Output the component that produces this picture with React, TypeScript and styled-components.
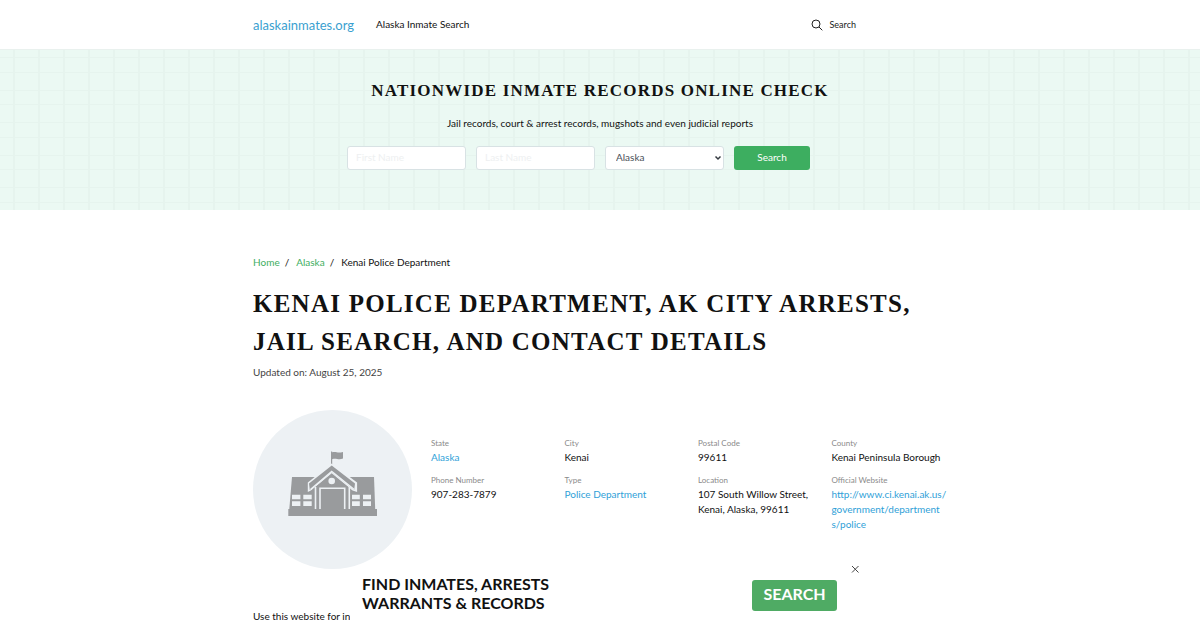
import React from "react";
import styled, { createGlobalStyle } from "styled-components";

const GlobalStyle = createGlobalStyle`
  *, *::before, *::after { box-sizing: border-box; }
  body {
    margin: 0;
    background: #fff;
    color: #111;
    font-family: Lato, "Liberation Sans", sans-serif;
    font-size: 10px;
    line-height: 15px;
  }
  a { color: inherit; text-decoration: none; }
  button, input, select { font: inherit; }
`;

const Container = styled.div`
  width: 100%;
  max-width: 714px;
  margin: 0 auto;
  padding: 0 10px;
`;

const Header = styled.header`
  background: #fff;
  border-bottom: 1px solid #e9f1ee;
`;

const Nav = styled.nav`
  display: flex;
  align-items: center;
  gap: 22px;
  min-height: 49px;
  padding-right: 91px;
`;

const Brand = styled.a`
  color: #3a9fd0;
  font-size: 13px;
  line-height: 20px;
`;

const SearchToggle = styled.button`
  display: flex;
  align-items: center;
  gap: 7px;
  margin-left: auto;
  padding: 0;
  border: 0;
  background: none;
  color: #222;
  font-size: 9px;
  cursor: pointer;
`;

const Hero = styled.section`
  padding: 28px 10px 40px;
  text-align: center;
  background-color: #ebf9f3;
  background-image:
    linear-gradient(90deg, #e6f4ee 2px, transparent 2px),
    linear-gradient(#e6f4ee 1px, transparent 1px),
    linear-gradient(#e6f4ee 1px, transparent 1px),
    linear-gradient(#e6f4ee 1px, transparent 1px),
    linear-gradient(#e6f4ee 1px, transparent 1px);
  background-size: 25px 100%, 100% 65px, 100% 65px, 100% 65px, 100% 65px;
  background-position: 13px 0, 0 7px, 0 22px, 0 40px, 0 54px;
`;

const HeroTitle = styled.h2`
  margin: 0;
  font: bold 17px/25px "Liberation Serif", serif;
  letter-spacing: 0.07em;
  text-transform: uppercase;
`;

const HeroText = styled.p`
  margin: 13px 0 15px;
`;

const SearchForm = styled.form`
  display: grid;
  grid-template-columns: repeat(4, 1fr);
  gap: 10px;
  max-width: 506px;
  margin: 0 auto;
`;

const Field = styled.input`
  width: 100%;
  height: 24px;
  padding: 0 8px 2px;
  border: 1px solid #d8e2e4;
  border-radius: 3px;
  background: #fff;
  &::placeholder { color: #eef0f1; opacity: 1; }
`;

const SelectBox = styled.div`
  display: grid;
  align-items: center;
  > * { grid-area: 1 / 1; }
  svg { justify-self: end; margin-right: 2px; pointer-events: none; }
`;

const Select = styled.select`
  width: 100%;
  height: 24px;
  padding: 0 10px 1px;
  border: 1px solid #d8e2e4;
  border-radius: 3px;
  background: #fff;
  color: #495057;
  appearance: none;
`;

const Submit = styled.button`
  justify-self: start;
  width: 76px;
  height: 24px;
  padding: 0 0 1px;
  border: 0;
  border-radius: 3px;
  background: #3dae60;
  color: #fff;
  cursor: pointer;
`;

const Main = styled.main`
  padding: 45px 0 8px;
`;

const Breadcrumb = styled.ol`
  display: flex;
  margin: 0;
  padding: 0;
  list-style: none;
`;

const Crumb = styled.li`
  & + &::before { content: "/"; padding: 0 7px 0 5px; }
  a { color: #3dae60; }
`;

const Title = styled.h1`
  margin: 15px 0 4px;
  font: bold 25px/38px "Liberation Serif", serif;
  letter-spacing: 0.05em;
  text-transform: uppercase;
`;

const Updated = styled.p`
  margin: 0 0 30px;
  color: #444;
`;

const Profile = styled.section`
  display: flex;
  align-items: flex-start;
  gap: 19px;
  margin-bottom: 40px;
`;

const Badge = styled.div`
  display: flex;
  flex: none;
  width: 159px;
  height: 159px;
  border-radius: 50%;
  background: #edf1f4;
`;

const Details = styled.dl`
  display: grid;
  flex: 1;
  grid-template-columns: repeat(4, minmax(0, 1fr));
  gap: 8px 18px;
  margin: 0;
  padding-top: 26px;
`;

const Term = styled.dt`
  color: #8a8a8a;
  font-size: 8px;
  line-height: 14px;
`;

const Value = styled.dd`
  margin: 0;
  white-space: pre-line;
  overflow-wrap: anywhere;
  a { color: #2f9fd8; }
`;

const Intro = styled.p`
  margin: 0;
`;

const Banner = styled.aside`
  position: fixed;
  bottom: 0;
  left: 50%;
  display: flex;
  align-items: center;
  justify-content: space-between;
  width: 500px;
  max-width: 100%;
  height: 50px;
  padding: 0 13px 0 12px;
  background: #fff;
  transform: translateX(-50%);
`;

const BannerText = styled.p`
  margin: 0;
  padding-bottom: 4px;
  color: #111;
  font-size: 16px;
  font-weight: bold;
  line-height: 19px;
  text-transform: uppercase;
`;

const BannerLink = styled.a`
  width: 85px;
  padding-bottom: 3px;
  border-radius: 3px;
  background: #4fab64;
  color: #fff;
  font-size: 16px;
  font-weight: bold;
  line-height: 28px;
  text-align: center;
`;

const Close = styled.button`
  position: absolute;
  top: -6px;
  right: -10px;
  display: flex;
  padding: 0;
  border: 0;
  background: none;
  color: #444;
  cursor: pointer;
`;

function SearchIcon() {
  return (
    <svg width="12" height="12" viewBox="0 0 12 12" fill="none" stroke="currentColor" aria-hidden="true">
      <circle cx="5" cy="5" r="4" />
      <path d="M8 8l3.3 3.3" />
    </svg>
  );
}

function ChevronIcon() {
  return (
    <svg width="8" height="8" viewBox="0 0 8 8" fill="none" stroke="#343a40" strokeWidth="1.5" aria-hidden="true">
      <path d="M1.500 2.500L4 5l2.500-2.500" />
    </svg>
  );
}

function CivicBuilding() {
  return (
    <svg width="159" height="159" viewBox="0 0 159 159" aria-hidden="true">
      <g fill="#999b9d">
        <path d="M78 41.500h1.200v.8c4-1.200 5 1.200 10.800-.4v6.600c-5 1.800-7-1-10.800.7V58H78z" />
        <path d="M39 67h82l1.200 32H36.300z" />
        <path d="M35.300 99h88.700v7H35.300z" />
      </g>
      <path d="M78.700 53.500L54.800 72.500v9.500l3-1.500 20.900-16 20.900 16 4.500 1.500V72.500z" fill="#edf1f4" />
      <path d="M78.700 55.500L56 73.500l.8 6.500L78.700 62l22.500 18 .8-6.500z" fill="#999b9d" />
      <path d="M60.500 78.500L78.700 63.200l18.500 15.300V99H60.500z" fill="#999b9d" />
      <g fill="none" stroke="#edf1f4" strokeWidth="1.600">
        <path d="M57.500 79.500L78.700 61.500l22.500 18" />
        <path d="M62.500 77v22M96.300 77v22" />
        <path d="M67 99V78.300h24.700V99" />
      </g>
      <g fill="#edf1f4">
        <circle cx="78.700" cy="71" r="3.300" />
        <path d="M39 84.700h8.400v4.600H39zM50.300 84.700h8.400v4.600h-8.400zM39 91.300h8.400V96H39zM50.300 91.300h8.400V96h-8.400z" />
        <path d="M99 84.700h7.800v4.600H99zM110 84.700h8v4.600h-8zM99 91.300h7.800V96H99zM110 91.300h8V96h-8z" />
      </g>
    </svg>
  );
}

function CloseIcon() {
  return (
    <svg width="10" height="10" viewBox="0 0 10 10" fill="none" stroke="currentColor" aria-hidden="true">
      <path d="M2 2l6.500 6.500M8.500 2L2 8.500" />
    </svg>
  );
}

const details: { term: string; value: string; href?: string }[] = [
  { term: "State", value: "Alaska", href: "#alaska" },
  { term: "City", value: "Kenai" },
  { term: "Postal Code", value: "99611" },
  { term: "County", value: "Kenai Peninsula Borough" },
  { term: "Phone Number", value: "907-283-7879" },
  { term: "Type", value: "Police Department", href: "#police" },
  { term: "Location", value: "107 South Willow Street, Kenai, Alaska, 99611" },
  {
    term: "Official Website",
    value: "http://www.ci.kenai.ak.us/\ngovernment/department\ns/police",
    href: "http://www.ci.kenai.ak.us/government/departments/police",
  },
];

export default function App() {
  return (
    <>
      <GlobalStyle />
      <Header>
        <Container>
          <Nav>
            <Brand href="#">alaskainmates.org</Brand>
            <a href="#search">Alaska Inmate Search</a>
            <SearchToggle type="button">
              <SearchIcon />
              Search
            </SearchToggle>
          </Nav>
        </Container>
      </Header>

      <Hero id="search">
        <HeroTitle>Nationwide Inmate Records Online Check</HeroTitle>
        <HeroText>Jail records, court &amp; arrest records, mugshots and even judicial reports</HeroText>
        <SearchForm onSubmit={(e) => e.preventDefault()}>
          <Field type="text" placeholder="First Name" aria-label="First Name" />
          <Field type="text" placeholder="Last Name" aria-label="Last Name" />
          <SelectBox>
            <Select aria-label="State" defaultValue="Alaska">
              <option>Alaska</option>
            </Select>
            <ChevronIcon />
          </SelectBox>
          <Submit type="submit">Search</Submit>
        </SearchForm>
      </Hero>

      <Main>
        <Container>
          <nav aria-label="Breadcrumb">
            <Breadcrumb>
              <Crumb><a href="#">Home</a></Crumb>
              <Crumb><a href="#alaska">Alaska</a></Crumb>
              <Crumb aria-current="page">Kenai Police Department</Crumb>
            </Breadcrumb>
          </nav>
          <Title>Kenai Police Department, AK City Arrests, Jail Search, and Contact Details</Title>
          <Updated>Updated on: August 25, 2025</Updated>
          <Profile>
            <Badge><CivicBuilding /></Badge>
            <Details>
              {details.map(({ term, value, href }) => (
                <div key={term}>
                  <Term>{term}</Term>
                  <Value>{href ? <a href={href}>{value}</a> : value}</Value>
                </div>
              ))}
            </Details>
          </Profile>
          <Intro>Use this website for in</Intro>
        </Container>
      </Main>

      <Banner>
        <BannerText>
          Find inmates, arrests
          <br />
          warrants &amp; records
        </BannerText>
        <BannerLink href="#search">SEARCH</BannerLink>
        <Close type="button" aria-label="Close">
          <CloseIcon />
        </Close>
      </Banner>
    </>
  );
}
